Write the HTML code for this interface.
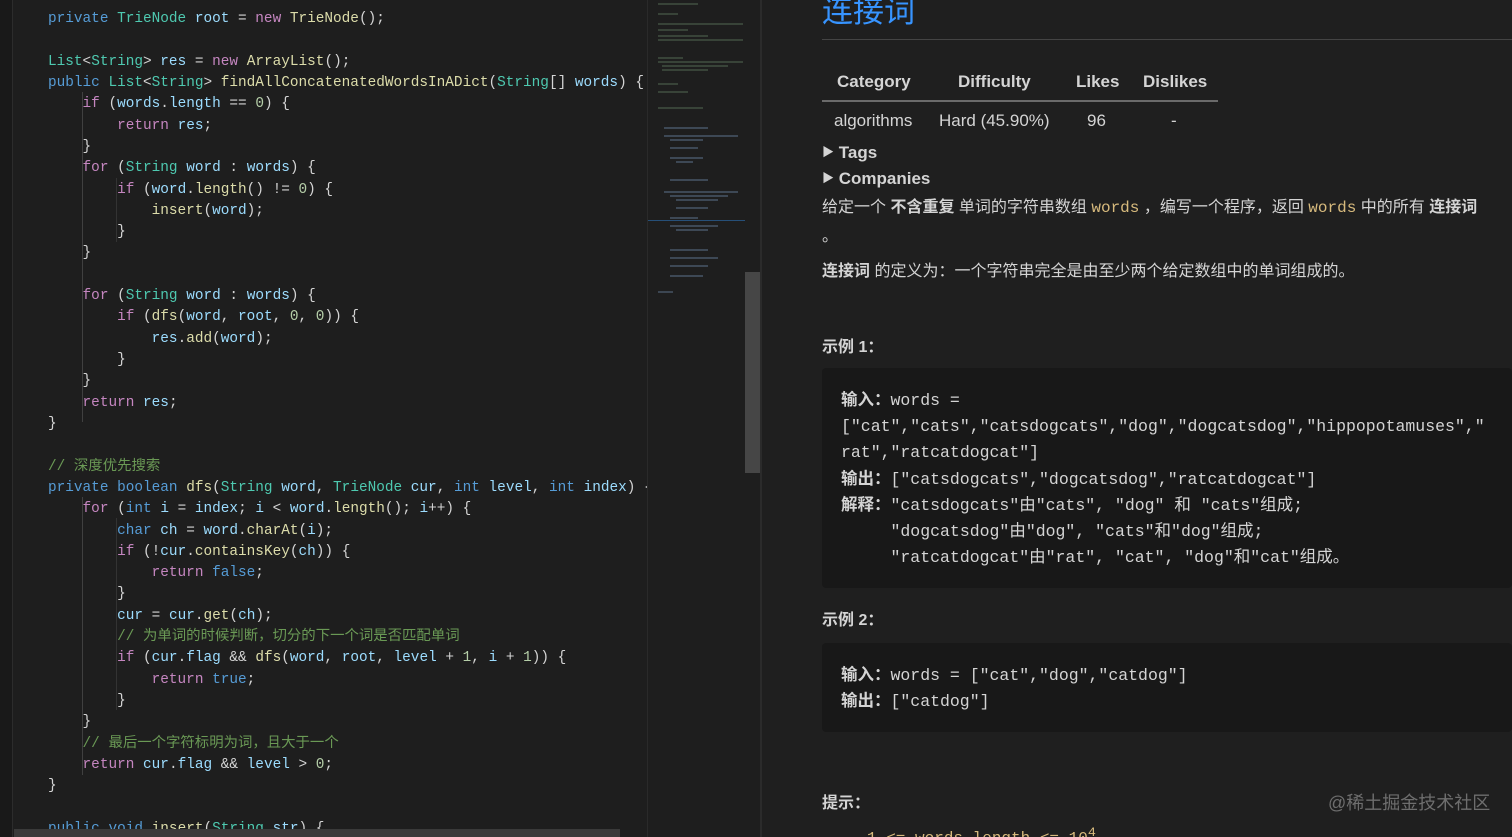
<!DOCTYPE html>
<html><head><meta charset="utf-8"><style>
*{margin:0;padding:0;box-sizing:border-box}
html,body{width:1512px;height:837px;overflow:hidden}
body{background:#1f1f1f;position:relative;font-family:"Liberation Sans","Noto Sans CJK SC",sans-serif}
#ed{position:absolute;left:0;top:0;width:647px;height:837px;background:#1e1e1e;overflow:hidden}
#gut{position:absolute;left:0;top:0;width:13px;height:837px;background:#191919;border-right:1px solid #2c2c2c}
.code{position:absolute;left:48px;top:0;font-family:"Liberation Mono","Noto Sans CJK SC",monospace;font-size:14.4px;color:#d4d4d4;white-space:pre}
.code div{height:21.32px;line-height:21.32px;position:relative;top:9px}
.k{color:#569cd6}.t{color:#4ec9b0}.c{color:#c586c0}.f{color:#dcdcaa}.v{color:#9cdcfe}.n{color:#b5cea8}.cm{color:#6a9955}
#mm{position:absolute;left:647px;top:0;width:98px;height:837px;background:#1e1e1e;border-left:1px solid #2a2a2a}
#sb{position:absolute;left:745px;top:0;width:15px;height:837px;background:#1e1e1e}
#thumb{position:absolute;left:745px;top:272px;width:15px;height:201px;background:#464646}
#div{position:absolute;left:760px;top:0;width:2px;height:837px;background:#2b2b2b}
#rp{position:absolute;left:762px;top:0;right:0;height:837px;background:#1f1f1f;color:#d4d4d4;overflow:hidden}
.a{position:absolute;white-space:nowrap}
h1{position:absolute;left:60px;top:-14px;font-size:31px;font-weight:normal;color:#3794ff}
.pre{position:absolute;left:60px;right:0;background:#181818;border-radius:4px}
.pm{font-family:"Liberation Mono","Noto Sans CJK SC",monospace;font-size:16.5px;color:#d4d4d4}
.pm div{height:26.2px;line-height:26.2px;overflow:visible}
.pm b{font-family:"Liberation Mono","Noto Sans CJK SC",monospace}
.y{color:#d7ba7d;font-family:"Liberation Mono",monospace}
</style></head><body>
<div id="ed"><div id="gut"></div>
<div style="position:absolute;left:82px;top:92px;width:1px;height:330px;background:#404040"></div>
<div style="position:absolute;left:82px;top:497px;width:1px;height:278px;background:#404040"></div>
<div style="position:absolute;left:116px;top:178px;width:1px;height:64px;background:#333"></div>
<div style="position:absolute;left:116px;top:518px;width:1px;height:192px;background:#333"></div>
<div class="code"><div><span class="k">private</span> <span class="t">TrieNode</span> <span class="v">root</span> = <span class="c">new</span> <span class="f">TrieNode</span>();</div><div> </div><div><span class="t">List</span>&lt;<span class="t">String</span>&gt; <span class="v">res</span> = <span class="c">new</span> <span class="f">ArrayList</span>();</div><div><span class="k">public</span> <span class="t">List</span>&lt;<span class="t">String</span>&gt; <span class="f">findAllConcatenatedWordsInADict</span>(<span class="t">String</span>[] <span class="v">words</span>) {</div><div>    <span class="c">if</span> (<span class="v">words</span>.<span class="v">length</span> == <span class="n">0</span>) {</div><div>        <span class="c">return</span> <span class="v">res</span>;</div><div>    }</div><div>    <span class="c">for</span> (<span class="t">String</span> <span class="v">word</span> : <span class="v">words</span>) {</div><div>        <span class="c">if</span> (<span class="v">word</span>.<span class="f">length</span>() != <span class="n">0</span>) {</div><div>            <span class="f">insert</span>(<span class="v">word</span>);</div><div>        }</div><div>    }</div><div> </div><div>    <span class="c">for</span> (<span class="t">String</span> <span class="v">word</span> : <span class="v">words</span>) {</div><div>        <span class="c">if</span> (<span class="f">dfs</span>(<span class="v">word</span>, <span class="v">root</span>, <span class="n">0</span>, <span class="n">0</span>)) {</div><div>            <span class="v">res</span>.<span class="f">add</span>(<span class="v">word</span>);</div><div>        }</div><div>    }</div><div>    <span class="c">return</span> <span class="v">res</span>;</div><div>}</div><div> </div><div><span class="cm">// 深度优先搜索</span></div><div><span class="k">private</span> <span class="k">boolean</span> <span class="f">dfs</span>(<span class="t">String</span> <span class="v">word</span>, <span class="t">TrieNode</span> <span class="v">cur</span>, <span class="k">int</span> <span class="v">level</span>, <span class="k">int</span> <span class="v">index</span>) {</div><div>    <span class="c">for</span> (<span class="k">int</span> <span class="v">i</span> = <span class="v">index</span>; <span class="v">i</span> &lt; <span class="v">word</span>.<span class="f">length</span>(); <span class="v">i</span>++) {</div><div>        <span class="k">char</span> <span class="v">ch</span> = <span class="v">word</span>.<span class="f">charAt</span>(<span class="v">i</span>);</div><div>        <span class="c">if</span> (!<span class="v">cur</span>.<span class="f">containsKey</span>(<span class="v">ch</span>)) {</div><div>            <span class="c">return</span> <span class="k">false</span>;</div><div>        }</div><div>        <span class="v">cur</span> = <span class="v">cur</span>.<span class="f">get</span>(<span class="v">ch</span>);</div><div>        <span class="cm">// 为单词的时候判断，切分的下一个词是否匹配单词</span></div><div>        <span class="c">if</span> (<span class="v">cur</span>.<span class="v">flag</span> &amp;&amp; <span class="f">dfs</span>(<span class="v">word</span>, <span class="v">root</span>, <span class="v">level</span> + <span class="n">1</span>, <span class="v">i</span> + <span class="n">1</span>)) {</div><div>            <span class="c">return</span> <span class="k">true</span>;</div><div>        }</div><div>    }</div><div>    <span class="cm">// 最后一个字符标明为词，且大于一个</span></div><div>    <span class="c">return</span> <span class="v">cur</span>.<span class="v">flag</span> &amp;&amp; <span class="v">level</span> &gt; <span class="n">0</span>;</div><div>}</div><div> </div><div><span class="k">public</span> <span class="k">void</span> <span class="f">insert</span>(<span class="t">String</span> <span class="v">str</span>) {</div></div>
<div style="position:absolute;left:14px;top:829px;width:606px;height:8px;background:#3a3a3a"></div>
</div>
<div id="mm">
<svg width="98" height="837" style="position:absolute;left:0;top:0" stroke-width="1.2" opacity="0.55">
<g stroke="#6a8a6a"><line x1="10" y1="4" x2="50" y2="4"/><line x1="10" y1="14" x2="30" y2="14"/><line x1="10" y1="24" x2="95" y2="24"/><line x1="10" y1="30" x2="40" y2="30"/><line x1="10" y1="36" x2="60" y2="36"/><line x1="10" y1="40" x2="95" y2="40"/><line x1="10" y1="58" x2="35" y2="58"/><line x1="10" y1="62" x2="95" y2="62"/><line x1="14" y1="66" x2="80" y2="66"/><line x1="14" y1="70" x2="60" y2="70"/><line x1="10" y1="84" x2="30" y2="84"/><line x1="10" y1="92" x2="40" y2="92"/><line x1="10" y1="108" x2="55" y2="108"/></g>
<g stroke="#7a9abf"><line x1="16" y1="128" x2="60" y2="128"/><line x1="16" y1="136" x2="90" y2="136"/><line x1="22" y1="140" x2="55" y2="140"/><line x1="22" y1="148" x2="50" y2="148"/><line x1="22" y1="158" x2="55" y2="158"/><line x1="28" y1="162" x2="45" y2="162"/><line x1="22" y1="180" x2="60" y2="180"/><line x1="16" y1="192" x2="90" y2="192"/><line x1="22" y1="196" x2="80" y2="196"/><line x1="28" y1="200" x2="70" y2="200"/><line x1="28" y1="208" x2="60" y2="208"/><line x1="22" y1="218" x2="50" y2="218"/><line x1="22" y1="226" x2="70" y2="226"/><line x1="28" y1="230" x2="60" y2="230"/><line x1="22" y1="250" x2="60" y2="250"/><line x1="22" y1="258" x2="70" y2="258"/><line x1="22" y1="266" x2="60" y2="266"/><line x1="22" y1="276" x2="55" y2="276"/><line x1="10" y1="292" x2="25" y2="292"/></g>
</svg>
<div style="position:absolute;left:0;top:220px;width:98px;height:1px;background:#264f78"></div>
</div>
<div id="sb"></div><div id="thumb"></div><div id="div"></div>
<div id="rp">
<h1>连接词</h1>
<div class="a" style="left:60px;top:39px;right:0;height:1px;background:#444"></div>
<div class="a" style="left:75px;top:72px;font-size:17px;font-weight:bold">Category</div>
<div class="a" style="left:196px;top:72px;font-size:17px;font-weight:bold">Difficulty</div>
<div class="a" style="left:314px;top:72px;font-size:17px;font-weight:bold">Likes</div>
<div class="a" style="left:381px;top:72px;font-size:17px;font-weight:bold">Dislikes</div>
<div class="a" style="left:60px;top:100px;width:396px;height:2px;background:#6a6a6a"></div>
<div class="a" style="left:72px;top:111px;font-size:17px">algorithms</div>
<div class="a" style="left:177px;top:111px;font-size:17px">Hard (45.90%)</div>
<div class="a" style="left:325px;top:111px;font-size:17px">96</div>
<div class="a" style="left:409px;top:111px;font-size:17px">-</div>
<div class="a" style="left:60px;top:143px;font-size:17px;font-weight:bold"><span style="font-size:12px;position:relative;top:-2px">▶</span> Tags</div>
<div class="a" style="left:60px;top:169px;font-size:17px;font-weight:bold"><span style="font-size:12px;position:relative;top:-2px">▶</span> Companies</div>
<div class="a" style="left:60px;top:193px;font-size:16px">给定一个 <b>不含重复</b> 单词的字符串数组 <span class="y">words</span> ，编写一个程序，返回 <span class="y">words</span> 中的所有 <b>连接词</b></div>
<div class="a" style="left:60px;top:222px;font-size:16px">。</div>
<div class="a" style="left:60px;top:257px;font-size:16px"><b>连接词</b> 的定义为：一个字符串完全是由至少两个给定数组中的单词组成的。</div>
<div class="a" style="left:60px;top:333px;font-size:16px;font-weight:bold">示例 1：</div>
<div class="pre" style="top:368px;height:220px"></div>
<div class="a pm" style="left:79px;top:388px"><div><b>输入：</b>words =</div><div>["cat","cats","catsdogcats","dog","dogcatsdog","hippopotamuses","</div><div>rat","ratcatdogcat"]</div><div><b>输出：</b>["catsdogcats","dogcatsdog","ratcatdogcat"]</div><div><b>解释：</b>"catsdogcats"由"cats", "dog" 和 "cats"组成;</div><div>&nbsp;&nbsp;&nbsp;&nbsp;&nbsp;"dogcatsdog"由"dog", "cats"和"dog"组成;</div><div>&nbsp;&nbsp;&nbsp;&nbsp;&nbsp;"ratcatdogcat"由"rat", "cat", "dog"和"cat"组成。</div></div>
<div class="a" style="left:60px;top:606px;font-size:16px;font-weight:bold">示例 2：</div>
<div class="pre" style="top:643px;height:89px"></div>
<div class="a pm" style="left:79px;top:663px"><div><b>输入：</b>words = ["cat","dog","catdog"]</div><div><b>输出：</b>["catdog"]</div></div>
<div class="a" style="left:60px;top:789px;font-size:16px;font-weight:bold">提示：</div>
<div class="a" style="left:566px;top:789px;font-size:18px;color:#6e6e6e">@稀土掘金技术社区</div>
<div class="a" style="left:105px;top:826px;font-size:16px;color:#d7ba7d;font-family:'Liberation Mono',monospace">1 &lt;= words.length &lt;= 10<sup>4</sup></div>
</div>
</body></html>
